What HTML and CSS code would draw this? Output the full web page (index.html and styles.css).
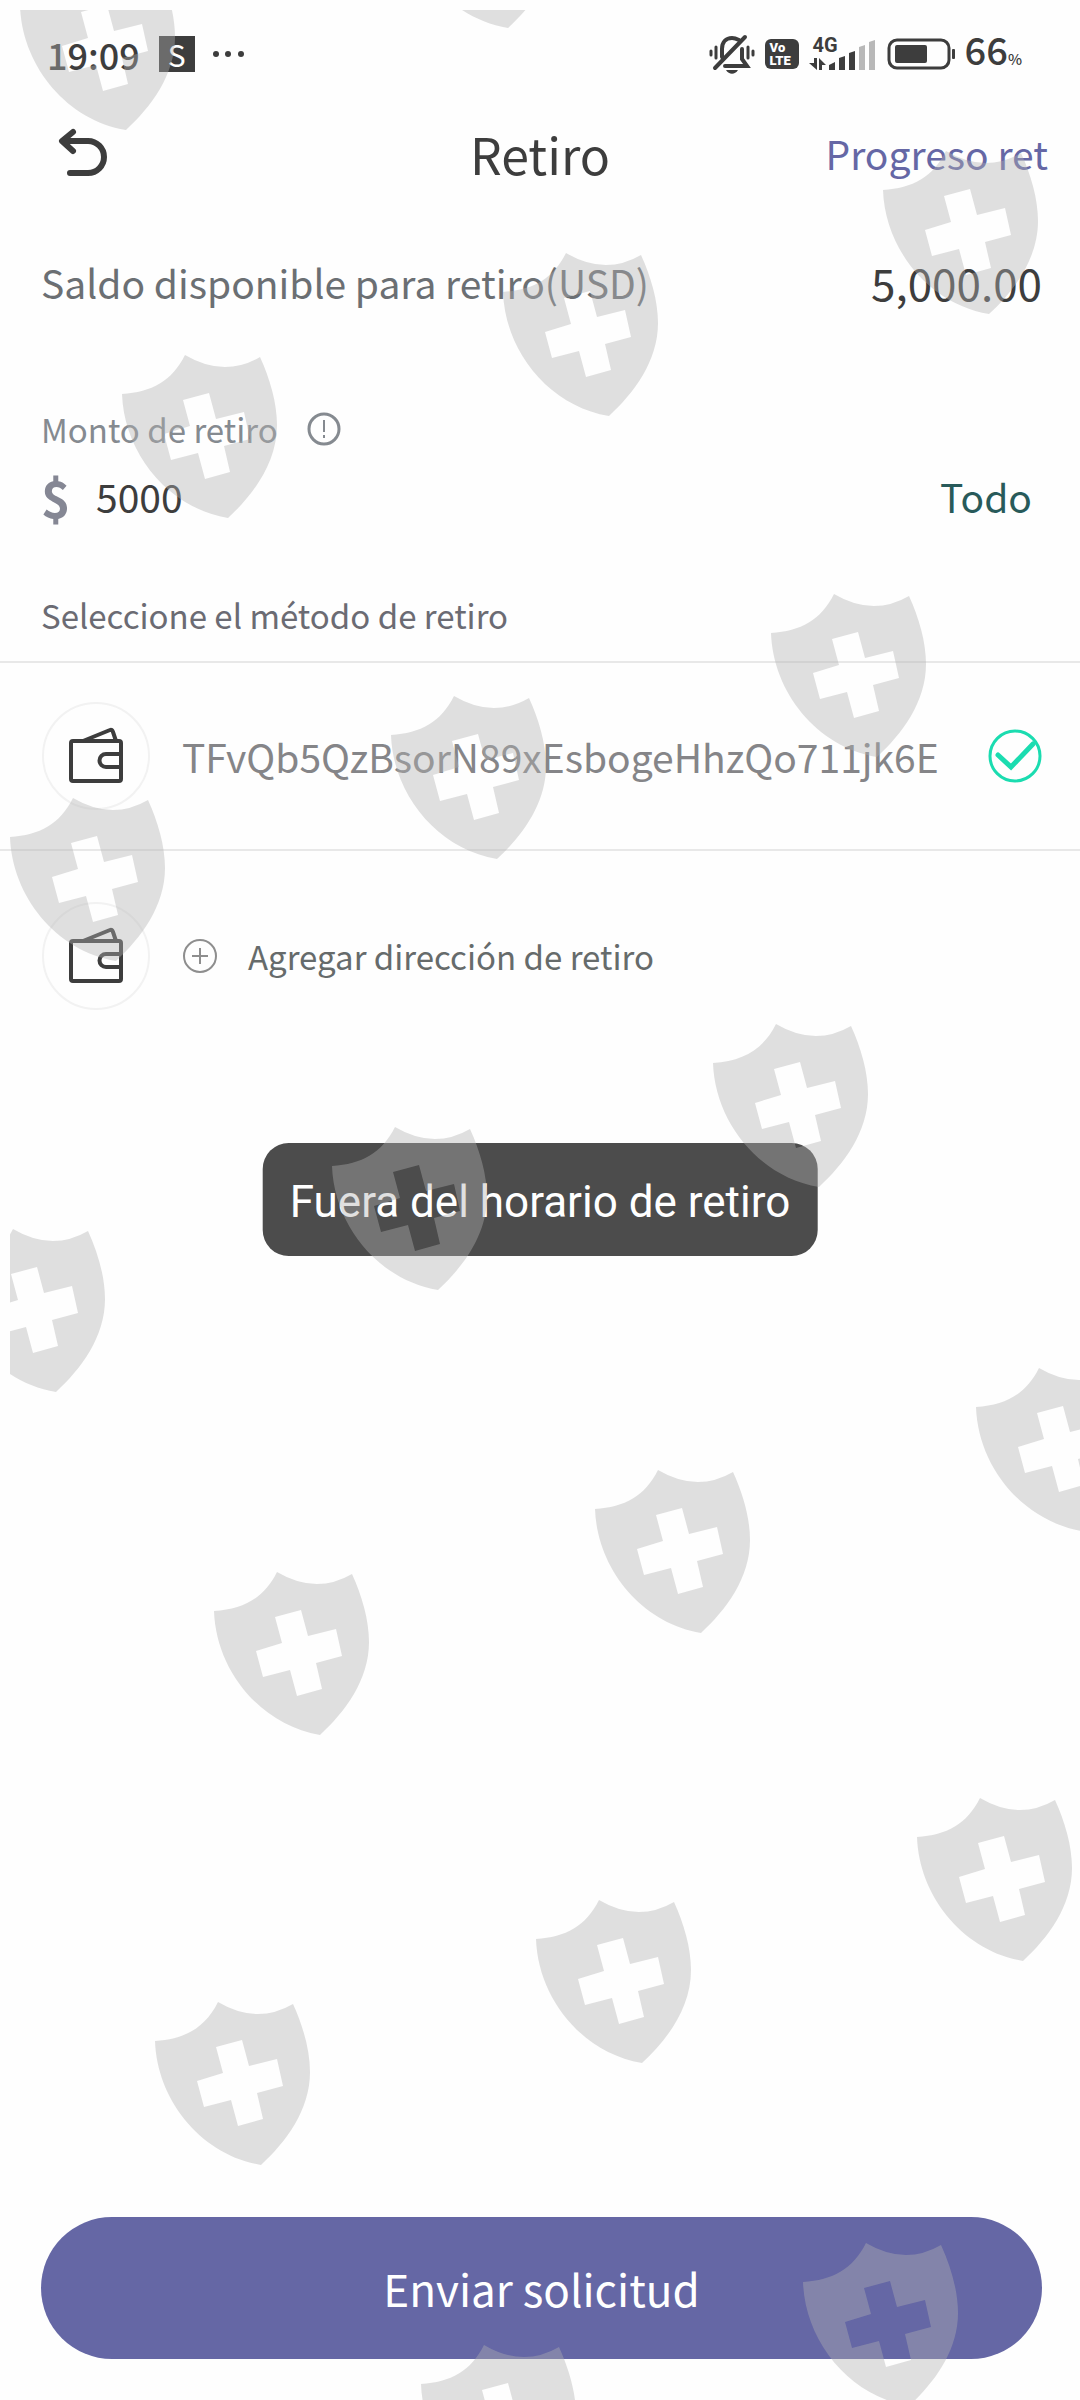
FILE: index.html
```html
<!DOCTYPE html>
<html lang="es">
<head>
    <meta charset="UTF-8">
    <meta name="viewport" content="width=device-width, initial-scale=1.0">
    <title>Retiro</title>
    <link rel="stylesheet" href="styles.css">
</head>
<body>
    <div class="status-bar">
        <span class="clock">19:09</span>
        <span class="app-badge">S</span>
        <svg class="dots" width="34" height="8" viewBox="0 0 34 8"><circle cx="4" cy="4" r="3"/><circle cx="16" cy="4" r="3"/><circle cx="29" cy="4" r="3"/></svg>
        <div class="status-right">
            <svg width="46" height="40" viewBox="0 0 46 40">
                <g fill="none" stroke="#3d3d3d" stroke-width="3" stroke-linecap="round">
                    <path d="M2 17v4M7 13v11M39 13v11M44 17v4"/>
                    <path stroke-width="4" d="M36 3 6 34M13 23V15c0-7 4-11 10-11 3 0 5 1 7 2"/>
                    <path stroke-width="4" d="M16 32h22l-5-7V15"/>
                </g>
                <path fill="#3d3d3d" d="M17 36h12c-3 5-9 5-12 0z"/>
            </svg>
            <span class="volte"><span>Vo</span><span>LTE</span></span>
            <div class="network">
                <span class="network-type">4G</span>
                <svg width="68" height="34" viewBox="0 0 68 34">
                    <g fill="#3d3d3d">
                        <path d="M5 21h3v12L0 26h5zM10 33V21l7 7h-4v5z"/>
                        <path d="M20 33v-5l6-3v8zM30 33V21l6-2v14zM40 33V16l6-2v19z"/>
                    </g>
                    <path fill="#b8b8b8" d="M50 33V10l6-2v25zM60 33V5l6-2v30z"/>
                </svg>
            </div>
            <svg class="battery" width="68" height="32" viewBox="0 0 68 32">
                <rect x="2" y="2" width="60" height="28" rx="8" fill="none" stroke="#3d3d3d" stroke-width="3"/>
                <rect x="8" y="7" width="32" height="18" rx="2" fill="#3d3d3d"/>
                <rect x="65" y="11" width="3" height="10" rx="1" fill="#3d3d3d"/>
            </svg>
            <span class="percent">66<small>%</small></span>
        </div>
    </div>

    <header>
        <button class="back" aria-label="Volver">
            <svg width="54" height="54" viewBox="0 0 54 54" fill="none" stroke="#3d3d3d" stroke-width="6" stroke-linecap="round" stroke-linejoin="round"><path d="M18 6 7 15 18 25M8 15h25a16 16 0 0 1 0 32H15"/></svg>
        </button>
        <h1>Retiro</h1>
        <a class="progress-link" href="#">Progreso ret</a>
    </header>

    <main>
        <div class="balance">
            <span>Saldo disponible para retiro(USD)</span>
            <span class="balance-value">5,000.00</span>
        </div>

        <div class="amount">
            <label for="amount">Monto de retiro
                <svg width="36" height="36" viewBox="0 0 36 36" fill="none" stroke="#858a90" stroke-width="3"><circle cx="18" cy="18" r="15"/><path stroke-width="2" d="M18 9v12M18 24v3"/></svg>
            </label>
            <div class="amount-row">
                <span class="currency">$</span>
                <input id="amount" type="text" value="5000">
                <button class="all">Todo</button>
            </div>
        </div>

        <h2>Seleccione el método de retiro</h2>

        <button class="method selected">
            <span class="wallet">
                <svg width="56" height="60" viewBox="0 0 56 60"><use href="#wallet"/></svg>
            </span>
            <span class="address">TFvQb5QzBsorN89xEsbogeHhzQo711jk6E</span>
            <svg class="check" width="54" height="54" viewBox="0 0 54 54" fill="none" stroke="#1bdcb0"><circle cx="27" cy="27" r="25" stroke-width="3"/><path stroke-width="5" stroke-linecap="round" d="m10 26 13 12 22-23"/></svg>
        </button>
        <button class="method">
            <span class="wallet">
                <svg width="56" height="60" viewBox="0 0 56 60"><use href="#wallet"/></svg>
            </span>
            <svg class="plus" width="36" height="36" viewBox="0 0 36 36" fill="none" stroke="#8e8e8e" stroke-width="2"><circle cx="18" cy="18" r="16"/><path d="M10 18h16M18 10v16"/></svg>
            <span>Agregar dirección de retiro</span>
        </button>
    </main>

    <footer>
        <button class="submit">Enviar solicitud</button>
    </footer>

    <div class="toast" role="status">Fuera del horario de retiro</div>

    <!-- shield pattern over the whole screen -->
    <svg class="shields" aria-hidden="true">
        <defs>
            <path id="shield" fill-rule="evenodd" d="M63 0Q102 23 138 2C148 24 155 48 155 70 155 108 131 140 106 163 46 153 2 98 0 39 30 37 50 26 63 0zM61 45l7 26-26 8 7 26 27-7 7 26 25-7-6-26 26-7-6-27-28 7-7-26z"/>
            <g id="wallet" fill="none" stroke="#3d3d3d" stroke-width="4" stroke-linejoin="round">
                <rect x="3" y="15" width="50" height="40" rx="2"/>
                <path d="M15 15 42 4q2-1 3 2l3 9M53 28H38a6 6 0 0 0 0 13h15"/>
            </g>
        </defs>
        <use href="#shield" x="392" y="-145"/>
        <use href="#shield" x="10" y="-43"/>
        <use href="#shield" x="873" y="141"/>
        <use href="#shield" x="493" y="243"/>
        <use href="#shield" x="112" y="345"/>
        <use href="#shield" x="761" y="584"/>
        <use href="#shield" x="381" y="686"/>
        <use href="#shield" x="0" y="788"/>
        <use href="#shield" x="703" y="1014"/>
        <use href="#shield" x="322" y="1117"/>
        <use href="#shield" x="-60" y="1219"/>
        <use href="#shield" x="966" y="1358"/>
        <use href="#shield" x="585" y="1460"/>
        <use href="#shield" x="204" y="1562"/>
        <use href="#shield" x="907" y="1788"/>
        <use href="#shield" x="526" y="1890"/>
        <use href="#shield" x="145" y="1992"/>
        <use href="#shield" x="793" y="2233"/>
        <use href="#shield" x="411" y="2335"/>
    </svg>
</body>
</html>
```

FILE: styles.css
```css
* {
    box-sizing: border-box;
}
body {
    position: relative;
    display: flex;
    flex-direction: column;
    min-height: 100vh;
    margin: 0;
    background: #fefefe;
    color: #3d3d3d;
    font-family: "Noto Sans CJK SC", sans-serif;
    font-size: 39px;
}
button, input {
    padding: 0;
    border: none;
    background: none;
    color: inherit;
    font: inherit;
    text-align: left;
}
button {
    cursor: pointer;
}
a {
    text-decoration: none;
}
svg {
    flex: none;
}

/* status bar */
.status-bar {
    display: flex;
    align-items: center;
    height: 108px;
    padding: 0 58px 0 47px;
}
.clock {
    font-size: 36px;
    font-weight: 500;
}
.app-badge {
    width: 36px;
    margin: 0 17px 0 19px;
    background: #3d3d3d;
    color: white;
    font-size: 30px;
    line-height: 36px;
    text-align: center;
}
.dots {
    fill: #3d3d3d;
}
.status-right {
    display: flex;
    align-items: center;
    gap: 10px;
    margin-left: auto;
}
.volte {
    display: flex;
    flex-direction: column;
    width: 34px;
    padding: 2px 0 2px 5px;
    border-radius: 6px;
    background: #3d3d3d;
    color: white;
    font-family: Roboto, sans-serif;
    font-size: 13px;
    font-weight: 900;
    line-height: 13px;
}
.network {
    position: relative;
    display: flex;
}
.network-type {
    position: absolute;
    top: 0;
    left: 4px;
    font-family: Roboto, sans-serif;
    font-size: 20px;
    font-weight: 700;
    line-height: 16px;
}
.percent {
    font-size: 38px;
    font-weight: 500;
    line-height: 50px;
}
.percent small {
    font-size: 15px;
}

/* title bar */
header {
    display: grid;
    grid-template-columns: 1fr auto 1fr;
    align-items: center;
    height: 90px;
    padding: 0 32px;
}
.back {
    display: flex;
    margin-left: 23px;
}
h1 {
    margin: 0;
    font-size: 50px;
    font-weight: 400;
}
.progress-link {
    justify-self: end;
    color: #6567a5;
}

main {
    flex: 1;
}
.balance {
    display: flex;
    justify-content: space-between;
    align-items: center;
    height: 168px;
    padding: 0 38px 0 41px;
    color: #6b6f73;
}
.balance-value {
    color: #3d3d3d;
    font-size: 44px;
}

.amount {
    padding: 38px 48px 0 41px;
}
.amount label {
    display: flex;
    align-items: center;
    gap: 28px;
    height: 50px;
    color: #858a90;
    font-size: 33px;
}
.amount-row {
    display: flex;
    align-items: center;
    height: 84px;
}
.currency {
    width: 55px;
    color: #858794;
    font-size: 50px;
    font-weight: 700;
}
.amount input {
    flex: 1;
    min-width: 0;
}
.all {
    color: #285a5a;
}

h2 {
    margin: 0;
    padding: 53px 41px 22px;
    color: #6b6b73;
    font-size: 33px;
    font-weight: 400;
    line-height: 48px;
}
.method {
    display: flex;
    align-items: center;
    width: 100%;
    height: 210px;
    padding: 0 38px 0 42px;
    color: #666b6b;
    font-size: 33px;
}
.selected {
    height: 190px;
    border-top: 2px solid #e8e8e8;
    border-bottom: 2px solid #e8e8e8;
    color: #858588;
    font-size: 39px;
}
.wallet {
    display: flex;
    justify-content: center;
    align-items: center;
    width: 108px;
    height: 108px;
    margin-right: 32px;
    border: 2px solid #f2f2f2;
    border-radius: 50%;
}
.check {
    margin-left: auto;
}
.plus {
    margin-right: 30px;
}

footer {
    padding: 0 38px 41px 41px;
}
.submit {
    width: 100%;
    height: 142px;
    border-radius: 71px;
    background: #6567a5;
    color: white;
    font-size: 44px;
    text-align: center;
}

.toast {
    position: absolute;
    top: 1143px;
    left: 50%;
    padding: 31px 27px 25px;
    border-radius: 26px;
    transform: translateX(-50%);
    background: #4c4c4c;
    color: white;
    font-family: Roboto, sans-serif;
    font-size: 44px;
    line-height: 57px;
    white-space: nowrap;
}

.shields {
    position: absolute;
    top: 10px;
    left: 10px;
    width: calc(100% - 10px);
    height: calc(100% - 10px);
    overflow: hidden;
    fill: rgba(177, 177, 177, 0.4);
    pointer-events: none;
}
```
